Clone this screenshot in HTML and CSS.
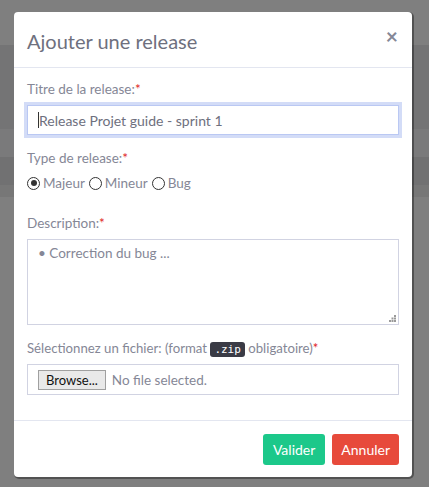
FILE: index.html
```html
<!DOCTYPE html>
<html lang="fr">
<head>
<meta charset="utf-8">
<title>Ajouter une release</title>
<link rel="stylesheet" href="styles.css">
</head>
<body>
<div class="page">
  <div class="band b1"></div>
  <div class="band b2"></div>
  <div class="band b3"></div>
  <div class="band b4"></div>
  <div class="band b5"></div>
</div>
<div class="overlay">
  <div class="modal">
    <div class="modal-header">
      <h5 class="modal-title">Ajouter une release</h5>
      <span class="close">&times;</span>
    </div>
    <div class="modal-body">
      <div class="group">
        <label class="lbl">Titre de la release:<span class="req">*</span></label>
        <div class="input focus"><span class="caret"></span>Release Projet guide - sprint 1</div>
      </div>
      <div class="group">
        <label class="lbl">Type de release:<span class="req">*</span></label>
        <div class="radios">
          <span class="radio checked"></span><span class="rlabel">Majeur</span>
          <span class="radio"></span><span class="rlabel">Mineur</span>
          <span class="radio"></span><span class="rlabel">Bug</span>
        </div>
      </div>
      <div class="group">
        <label class="lbl">Description:<span class="req">*</span></label>
        <div class="tawrap">
          <textarea class="textarea" placeholder="• Correction du bug ..."></textarea>
          <svg class="grip" width="7" height="7" viewBox="0 0 7 7"><g fill="#9a9a9a"><rect x="5" y="0" width="2" height="2"/><rect x="2.5" y="2.5" width="2" height="2"/><rect x="5" y="2.5" width="2" height="2"/><rect x="0" y="5" width="2" height="2"/><rect x="2.5" y="5" width="2" height="2"/><rect x="5" y="5" width="2" height="2"/></g></svg>
        </div>
      </div>
      <div class="group">
        <label class="lbl lbl-file">Sélectionnez un fichier: (format <kbd class="kbd">.zip</kbd> obligatoire)<span class="req">*</span></label>
        <div class="file"><span class="browse">Browse...</span><span class="nofile">No file selected.</span></div>
      </div>
    </div>
    <div class="modal-footer">
      <button class="btn btn-success">Valider</button>
      <button class="btn btn-danger">Annuler</button>
    </div>
  </div>
</div>
</body>
</html>
```

FILE: styles.css
```css
html, body {
  margin: 0;
  padding: 0;
}
body {
  width: 429px;
  height: 487px;
  overflow: hidden;
  background: #fff;
  font-family: "Lato", "Noto Sans", sans-serif;
  position: relative;
}
.page {
  display: flex;
  flex-direction: column;
  height: 487px;
  background: #fefefe;
}
.band { flex: none; }
.b1 { height: 45px; background: #fefefe; }
.b2 { height: 84px; background: #e8e8ea; }
.b3 { height: 28px; background: #f4f4f6; }
.b4 { height: 28px; background: #e2e2e4; }
.b5 { height: 12px; background: #eeeeee; }

.overlay {
  position: absolute;
  inset: 0;
  background: rgba(0, 0, 0, 0.5);
}
.modal {
  position: absolute;
  left: 14px;
  top: 12px;
  width: 398px;
  height: 465px;
  background: #fff;
  border-radius: 4px;
  box-shadow: 1px 1px 0 1px rgba(0,0,0,0.35);
  display: flex;
  flex-direction: column;
  box-sizing: border-box;
}
.modal-header {
  height: 56px;
  box-sizing: border-box;
  border-bottom: 1px solid #e3e6f0;
  display: flex;
  align-items: center;
  justify-content: space-between;
  padding: 0 14px 0 13px;
}
.modal-title {
  margin: 0;
  font-weight: 400;
  font-size: 20px;
  color: #6e707e;
  position: relative;
  top: 1px;
}
.close {
  font-size: 21px;
  color: #858796;
  font-weight: 700;
  line-height: 1;
  position: relative;
  top: -4px;
}
.modal-body {
  flex: 1;
  padding: 12px 13px 0;
  display: flex;
  flex-direction: column;
}
.group { display: flex; flex-direction: column; }
.lbl {
  font-size: 13.5px;
  color: #858796;
  line-height: 18px;
  height: 18px;
  margin-bottom: 7px;
}
.lbl-file { font-size: 13.2px; }
.req { color: #e02424; }
.input {
  height: 30px;
  box-sizing: border-box;
  border: 1px solid #bac8f3;
  box-shadow: 0 0 0 3px rgba(78, 115, 223, 0.25);
  font-size: 14px;
  color: #6e707e;
  display: flex;
  align-items: center;
  padding-left: 10px;
  margin-bottom: 14px;
}
.caret {
  width: 1px;
  height: 16px;
  background: #333;
}
.radios {
  display: flex;
  align-items: center;
  height: 18px;
  margin-bottom: 22px;
  font-size: 13.5px;
  color: #858796;
}
.radio {
  width: 11px;
  height: 11px;
  border: 1px solid #333;
  border-radius: 50%;
  box-sizing: content-box;
  position: relative;
  margin-right: 3px;
}
.radio.checked::after {
  content: "";
  position: absolute;
  left: 2.5px;
  top: 2.5px;
  width: 6px;
  height: 6px;
  border-radius: 50%;
  background: #333;
}
.rlabel { margin-right: 4px; }
.tawrap {
  position: relative;
  display: flex;
  flex-direction: column;
  margin: 0 0 14px;
}
.textarea {
  height: 86px;
  box-sizing: border-box;
  border: 1px solid #d1d3e2;
  border-radius: 0;
  font-family: inherit;
  font-size: 13.5px;
  color: #858796;
  padding: 5px 10px;
  resize: none;
  margin: 0;
  outline: none;
}
.textarea::placeholder { color: #858796; }
.grip {
  position: absolute;
  right: 3px;
  bottom: 3px;
}
.kbd {
  font-family: "DejaVu Sans Mono", monospace;
  font-size: 11px;
  background: #3a3b45;
  color: #fff;
  border-radius: 3px;
  padding: 1px 4px;
}
.file {
  height: 31px;
  box-sizing: border-box;
  border: 1px solid #d1d3e2;
  display: flex;
  align-items: center;
  padding-left: 10px;
  font-size: 13.5px;
}
.browse {
  background: #e9e9e9;
  border: 1px solid #a0a0a0;
  color: #111;
  height: 20px;
  box-sizing: border-box;
  padding: 0 7px;
  display: flex;
  align-items: center;
  margin-right: 6px;
  font-size: 13px;
}
.nofile { color: #858796; }
.modal-footer {
  border-top: 1px solid #e3e6f0;
  height: 57px;
  box-sizing: border-box;
  display: flex;
  justify-content: flex-end;
  align-items: center;
  padding: 0 13px;
  gap: 7px;
}
.btn {
  font-family: inherit;
  font-size: 14px;
  color: #fff;
  border: none;
  border-radius: 3px;
  height: 31px;
  padding: 0 9px;
}
.btn-success { background: #1cc88a; padding: 0 10px; }
.btn-danger { background: #e74a3b; }
```
